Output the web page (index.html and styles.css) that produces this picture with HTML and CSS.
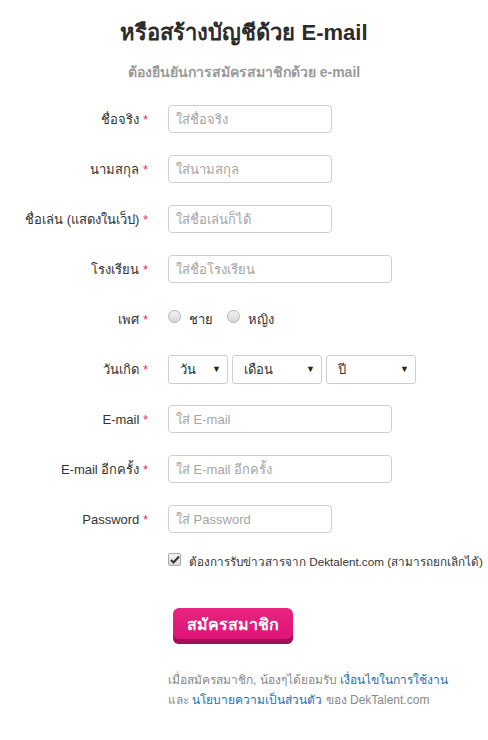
FILE: index.html
```html
<!DOCTYPE html>
<html lang="th">
<head>
<meta charset="utf-8">
<link rel="stylesheet" href="styles.css">
</head>
<body>
<div class="page">
  <h1 class="title">หรือสร้างบัญชีด้วย E-mail</h1>
  <p class="subtitle">ต้องยืนยันการสมัครสมาชิกด้วย e-mail</p>
  <form class="form">
    <label class="lbl">ชื่อจริง <span class="req">*</span></label>
    <div class="field"><input class="inp short" type="text" placeholder="ใส่ชื่อจริง"></div>

    <label class="lbl">นามสกุล <span class="req">*</span></label>
    <div class="field"><input class="inp short" type="text" placeholder="ใส่นามสกุล"></div>

    <label class="lbl">ชื่อเล่น (แสดงในเว็ป) <span class="req">*</span></label>
    <div class="field"><input class="inp short" type="text" placeholder="ใส่ชื่อเล่นก็ได้"></div>

    <label class="lbl">โรงเรียน <span class="req">*</span></label>
    <div class="field"><input class="inp long" type="text" placeholder="ใส่ชื่อโรงเรียน"></div>

    <label class="lbl">เพศ <span class="req">*</span></label>
    <div class="field radios">
      <label class="radio"><span class="dot"></span>ชาย</label>
      <label class="radio"><span class="dot"></span>หญิง</label>
    </div>

    <label class="lbl">วันเกิด <span class="req">*</span></label>
    <div class="field selects">
      <div class="sel s-day">วัน<span class="arrow">▼</span></div>
      <div class="sel s-month">เดือน<span class="arrow">▼</span></div>
      <div class="sel s-year">ปี<span class="arrow">▼</span></div>
    </div>

    <label class="lbl">E-mail <span class="req">*</span></label>
    <div class="field"><input class="inp long" type="text" placeholder="ใส่ E-mail"></div>

    <label class="lbl">E-mail อีกครั้ง <span class="req">*</span></label>
    <div class="field"><input class="inp long" type="text" placeholder="ใส่ E-mail อีกครั้ง"></div>

    <label class="lbl">Password <span class="req">*</span></label>
    <div class="field"><input class="inp short" type="text" placeholder="ใส่ Password"></div>
  </form>

  <div class="extra">
    <div class="check-row">
      <span class="check"><svg width="10" height="9" viewBox="0 0 10 9"><path d="M1 5 L3.5 7.5 L9 1.5" fill="none" stroke="#333" stroke-width="2"/></svg></span>
      <span class="check-text">ต้องการรับข่าวสารจาก Dektalent.com (สามารถยกเลิกได้)</span>
    </div>
    <button class="submit" type="button">สมัครสมาชิก</button>
    <p class="terms">เมื่อสมัครสมาชิก, น้องๆได้ยอมรับ <a href="#">เงื่อนไขในการใช้งาน</a><br>และ <a href="#">นโยบายความเป็นส่วนตัว</a> ของ DekTalent.com</p>
  </div>
</div>
</body>
</html>
```

FILE: styles.css
```css
html, body {
  margin: 0;
  padding: 0;
  background: #fff;
}
body {
  font-family: Tahoma, "Liberation Sans", sans-serif;
  color: #333;
  font-size: 13px;
}
.page {
  width: 488px;
}
.title {
  margin: 0;
  padding-top: 20px;
  text-align: center;
  font-size: 22px;
  font-weight: bold;
  color: #2b2b2b;
  line-height: 26px;
}
.subtitle {
  margin: 17px 0 0;
  text-align: center;
  font-size: 14px;
  font-weight: bold;
  color: #9a9a9a;
  line-height: 18px;
}
.form {
  display: grid;
  grid-template-columns: 148px 1fr;
  column-gap: 20px;
  row-gap: 22px;
  margin-top: 24px;
  align-items: center;
}
.lbl {
  text-align: right;
  font-size: 13px;
  color: #333;
  white-space: nowrap;
}
.req {
  color: #e8336f;
}
.field {
  display: flex;
  align-items: center;
  height: 28px;
}
.inp {
  box-sizing: border-box;
  height: 28px;
  border: 1px solid #cfcfcf;
  border-radius: 4px;
  padding: 0 7px;
  font-family: "Liberation Sans", Tahoma, sans-serif;
  font-size: 13px;
  color: #333;
  outline: none;
}
.inp::placeholder {
  color: #a5a5a5;
}
.short { width: 164px; }
.long { width: 224px; }
.radios {
  gap: 14px;
}
.radio {
  display: flex;
  align-items: center;
  gap: 8px;
}
.dot {
  width: 11px;
  height: 11px;
  border-radius: 50%;
  border: 1px solid #b5b5b5;
  background: linear-gradient(#f2f2f2, #d6d6d6);
  margin-top: -6px;
}
.selects {
  gap: 4px;
}
.sel {
  box-sizing: border-box;
  height: 29px;
  border: 1px solid #cfcfcf;
  border-radius: 3px;
  display: flex;
  align-items: center;
  justify-content: space-between;
  padding: 0 6px 0 11px;
  color: #333;
}
.arrow {
  font-size: 9px;
  color: #222;
}
.s-day { width: 60px; }
.s-month { width: 90px; }
.s-year { width: 90px; }
.extra {
  padding-left: 168px;
  margin-top: 20px;
}
.check-row {
  display: flex;
  align-items: center;
  gap: 8px;
  font-size: 11.7px;
  color: #333;
}
.check {
  width: 11px;
  height: 11px;
  border: 1px solid #aaa;
  border-radius: 2px;
  background: linear-gradient(#f4f4f4, #d9d9d9);
  display: flex;
  align-items: center;
  justify-content: center;
  margin-top: -6px;
}
.submit {
  display: block;
  margin: 37px 0 0 5px;
  width: 120px;
  height: 36px;
  border: none;
  border-radius: 6px;
  background: linear-gradient(#e8237f, #dd1276);
  box-shadow: inset 0 -5px 0 #a30e58;
  color: #fff;
  font-family: Tahoma, "Liberation Sans", sans-serif;
  font-size: 16px;
  font-weight: bold;
  padding: 0 0 4px;
}
.terms {
  margin: 26px 0 0;
  font-size: 12px;
  line-height: 20px;
  color: #888;
}
.terms a {
  color: #1f6fb5;
  text-decoration: none;
}
```
